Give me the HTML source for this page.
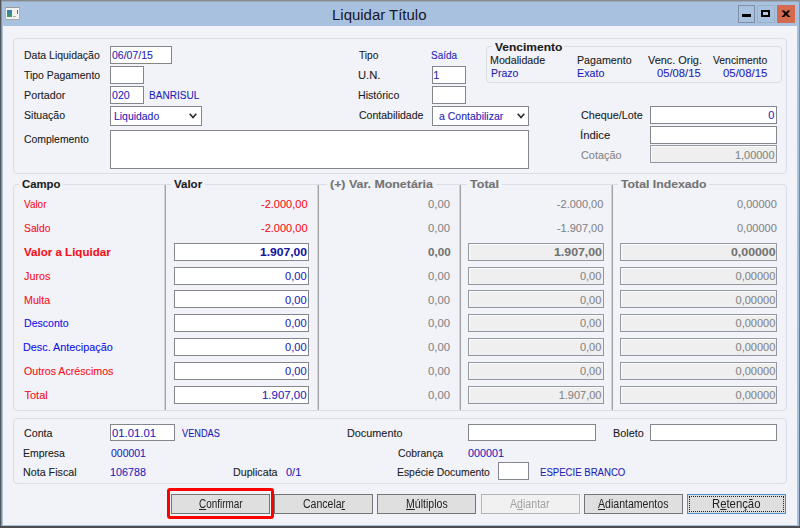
<!DOCTYPE html>
<html lang="pt-BR">
<head>
<meta charset="utf-8">
<title>Liquidar Título</title>
<style>
*{box-sizing:border-box;margin:0;padding:0}
html,body{width:800px;height:528px;overflow:hidden;background:#f2f3f9}
body{font-family:"Liberation Sans",sans-serif;font-size:11px;color:#1c1c1c;position:relative}
.t{position:absolute;white-space:nowrap;line-height:14px;height:14px;transform-origin:0 50%;-webkit-text-stroke:0.1px currentColor}
.b{font-weight:bold}
.bl{color:#1f1fb8}
.rd{color:#f50f18}
.lb{color:#1212e6}
.gy{color:#858585}
.b.gy{color:#737373}
.b.bl{color:#15159e}
.ttl{color:#16162a;-webkit-text-stroke:0}
#frame{position:absolute;left:0;top:0;width:800px;height:528px;background:#a7c1de}
.e{position:absolute}
#client{position:absolute;left:3px;top:26px;width:794px;height:499px;background:#f2f3f9}
.gb{position:absolute;border:1px solid #d7dfe4;border-radius:4px}
.lg{position:absolute;background:#f2f3f9;height:3px}
.in{position:absolute;background:#fff;border:1px solid #84868e}
.in.dis{background:#efefef;border-color:#9498a3;box-shadow:inset 1px 1px 0 rgba(255,255,255,.7)}
.btn{position:absolute;top:494px;width:99px;height:20px;border:1px solid #757575;background:#dfdfdf}
.bt{color:#222;-webkit-text-stroke:0;will-change:opacity}
.bd{color:#a2a2a2}
.btn.dis{background:#f1f1f1;border-color:#b6b6b6}
.btn.foc{border-color:#4b8fce}
.btn.foc i{position:absolute;left:1px;top:1px;right:1px;bottom:1px;border:1px dotted #222}
.vl{position:absolute;width:2px;background:linear-gradient(90deg,#d2d2d6 0,#d2d2d6 50%,#a3a3a6 50%);top:185px;height:225px}
u{text-decoration:underline;text-underline-offset:1px}
</style>
</head>
<body>
<div id="frame"></div>
<div class="e" style="left:0;top:0;width:800px;height:1px;background:#8a8a8a"></div>
<div class="e" style="left:0;top:1px;width:800px;height:1px;background:#99a9bd"></div>
<div class="e" style="left:0;top:0;width:1px;height:528px;background:#555"></div>
<div class="e" style="left:1px;top:1px;width:1px;height:525px;background:#8392a6"></div>
<div class="e" style="left:799px;top:0;width:1px;height:528px;background:linear-gradient(#909396,#6c6c6c)"></div>
<div class="e" style="left:0;top:526px;width:800px;height:2px;background:#4e4e4e"></div>
<div id="client"></div>
<!-- title bar icon -->
<div class="e" style="left:5px;top:7px;width:15px;height:13px;background:#f2f2f2;border:1px solid #b4b4b4;border-top-color:#9a9a9a;border-bottom-color:#a8a8a8"></div>
<div class="e" style="left:7px;top:10px;width:5px;height:7px;background:linear-gradient(#3a78b8,#3aa060)"></div>
<div class="e" style="left:17px;top:10px;width:1px;height:4px;background:linear-gradient(#3060b0,#40a050)"></div>
<div class="e" style="left:13px;top:16px;width:3px;height:1px;background:#b0b0b0"></div>
<!-- caption buttons -->
<div class="e" style="left:738px;top:5px;width:17px;height:18px;border:1px solid #7d8ea6;background:#a7c1de"></div>
<div class="e" style="left:742px;top:14px;width:9px;height:3px;background:#000"></div>
<div class="e" style="left:757px;top:5px;width:18px;height:18px;border:1px solid #9db1ca;background:#a7c1de"></div>
<div class="e" style="left:761px;top:10px;width:9px;height:7px;border:2px solid #000;background:#b3c9e3"></div>
<div class="e" style="left:777px;top:5px;width:18px;height:18px;background:#d46a50"></div>
<svg class="e" style="left:777px;top:5px" width="18" height="18" viewBox="0 0 18 18"><path d="M4.5 5.4 L7.1 5.4 L8.95 7.4 L10.8 5.4 L13.4 5.4 L10.3 8.7 L13.4 12 L10.8 12 L8.95 10 L7.1 12 L4.5 12 L7.6 8.7 Z" fill="#000"/></svg>

<div class="gb" style="left:13px;top:38px;width:774px;height:136px"></div>
<div class="gb" style="left:486px;top:46px;width:296px;height:37px"></div>
<div class="lg" style="left:492px;top:45px;width:72px"></div>
<div class="gb" style="left:13px;top:184px;width:774px;height:227px"></div>
<div class="lg" style="left:19px;top:183px;width:44px"></div>
<div class="lg" style="left:171px;top:183px;width:34px"></div>
<div class="lg" style="left:327px;top:183px;width:109px"></div>
<div class="lg" style="left:467px;top:183px;width:35px"></div>
<div class="lg" style="left:618px;top:183px;width:91px"></div>
<div class="vl" style="left:164px"></div>
<div class="vl" style="left:317px"></div>
<div class="vl" style="left:459px"></div>
<div class="vl" style="left:611px"></div>
<div class="gb" style="left:13px;top:418px;width:774px;height:66px"></div>
<div class="in " style="left:110px;top:46px;width:62px;height:18px"></div>
<div class="in " style="left:110px;top:66px;width:34px;height:18px"></div>
<div class="in " style="left:110px;top:86px;width:34px;height:18px"></div>
<div class="in " style="left:110px;top:106px;width:92px;height:20px"></div>
<div class="in " style="left:432px;top:66px;width:34px;height:18px"></div>
<div class="in " style="left:432px;top:86px;width:34px;height:18px"></div>
<div class="in " style="left:432px;top:106px;width:97px;height:20px"></div>
<div class="in " style="left:110px;top:129.5px;width:419px;height:39.5px"></div>
<div class="in " style="left:650px;top:106px;width:127px;height:18px"></div>
<div class="in " style="left:650px;top:126px;width:127px;height:18px"></div>
<div class="in dis" style="left:650px;top:145px;width:127px;height:18px"></div>
<div class="in " style="left:174px;top:243px;width:135px;height:18px"></div>
<div class="in dis" style="left:468px;top:243px;width:136px;height:18px"></div>
<div class="in dis" style="left:620px;top:243px;width:157px;height:18px"></div>
<div class="in " style="left:174px;top:267px;width:135px;height:18px"></div>
<div class="in dis" style="left:468px;top:267px;width:136px;height:18px"></div>
<div class="in dis" style="left:620px;top:267px;width:157px;height:18px"></div>
<div class="in " style="left:174px;top:290px;width:135px;height:18px"></div>
<div class="in dis" style="left:468px;top:290px;width:136px;height:18px"></div>
<div class="in dis" style="left:620px;top:290px;width:157px;height:18px"></div>
<div class="in " style="left:174px;top:314px;width:135px;height:18px"></div>
<div class="in dis" style="left:468px;top:314px;width:136px;height:18px"></div>
<div class="in dis" style="left:620px;top:314px;width:157px;height:18px"></div>
<div class="in " style="left:174px;top:338px;width:135px;height:18px"></div>
<div class="in dis" style="left:468px;top:338px;width:136px;height:18px"></div>
<div class="in dis" style="left:620px;top:338px;width:157px;height:18px"></div>
<div class="in " style="left:174px;top:362px;width:135px;height:18px"></div>
<div class="in dis" style="left:468px;top:362px;width:136px;height:18px"></div>
<div class="in dis" style="left:620px;top:362px;width:157px;height:18px"></div>
<div class="in " style="left:174px;top:386px;width:135px;height:18px"></div>
<div class="in dis" style="left:468px;top:386px;width:136px;height:18px"></div>
<div class="in dis" style="left:620px;top:386px;width:157px;height:18px"></div>
<div class="in " style="left:110px;top:424px;width:65px;height:17px"></div>
<div class="in " style="left:468px;top:424px;width:128px;height:17px"></div>
<div class="in " style="left:650px;top:424px;width:127px;height:17px"></div>
<div class="in " style="left:497.5px;top:462px;width:31.5px;height:18px"></div>
<svg class="e" style="left:188.3px;top:111px" width="10" height="10" viewBox="0 0 10 10"><path d="M1.7 2.8 L5 6.5 L8.3 2.8" stroke="#2a2a2a" stroke-width="1.6" fill="none"/></svg>
<svg class="e" style="left:515.5px;top:111px" width="10" height="10" viewBox="0 0 10 10"><path d="M1.7 2.8 L5 6.5 L8.3 2.8" stroke="#2a2a2a" stroke-width="1.6" fill="none"/></svg>
<div class="e" style="left:167px;top:488px;width:107px;height:31px;border:3px solid #ff0000;border-radius:3px"></div>
<div class="btn " style="left:171px"></div>
<div class="btn " style="left:274px"></div>
<div class="btn " style="left:377px"></div>
<div class="btn dis" style="left:480.5px"></div>
<div class="btn " style="left:584px"></div>
<div class="btn foc" style="left:687px"><i></i></div>
<div class="t ttl" id="t0" style="left:331.87px;transform:scaleX(0.9966);top:4.50px;font-size:15px;line-height:20px;height:20px;">Liquidar Título</div>
<div class="t " id="t1" style="left:23.69px;transform:scaleX(0.9527);top:48.00px;">Data Liquidação</div>
<div class="t " id="t2" style="left:24.41px;transform:scaleX(0.9472);top:68.00px;">Tipo Pagamento</div>
<div class="t " id="t3" style="left:23.76px;transform:scaleX(0.9768);top:88.00px;">Portador</div>
<div class="t " id="t4" style="left:23.63px;transform:scaleX(0.9592);top:108.00px;">Situação</div>
<div class="t " id="t5" style="left:24.00px;transform:scaleX(0.9468);top:131.50px;">Complemento</div>
<div class="t " id="t6" style="left:358.60px;transform:scaleX(0.9244);top:48.00px;">Tipo</div>
<div class="t " id="t7" style="left:358.25px;transform:scaleX(1.0209);top:68.00px;">U.N.</div>
<div class="t " id="t8" style="left:358.12px;transform:scaleX(0.9664);top:88.00px;">Histórico</div>
<div class="t " id="t9" style="left:358.78px;transform:scaleX(0.9580);top:108.00px;">Contabilidade</div>
<div class="t bl" id="t10" style="left:431.48px;transform:scaleX(0.9048);top:48.00px;">Saída</div>
<div class="t bl" id="t11" style="left:112.27px;transform:scaleX(0.9552);top:48.00px;">06/07/15</div>
<div class="t bl" id="t12" style="left:111.76px;transform:scaleX(0.9632);top:88.00px;">020</div>
<div class="t bl" id="t13" style="left:149.11px;transform:scaleX(0.9142);top:88.00px;">BANRISUL</div>
<div class="t bl" id="t14" style="left:114.08px;transform:scaleX(0.9472);top:108.50px;">Liquidado</div>
<div class="t bl" id="t15" style="left:433.34px;transform:scaleX(1.0000);top:68.00px;">1</div>
<div class="t bl" id="t16" style="left:439.43px;transform:scaleX(0.9553);top:108.50px;">a Contabilizar</div>
<div class="t b" id="t17" style="left:494.64px;transform:scaleX(1.0902);top:40.00px;">Vencimento</div>
<div class="t " id="t18" style="left:490.02px;transform:scaleX(0.9696);top:53.00px;">Modalidade</div>
<div class="t bl" id="t19" style="left:490.88px;transform:scaleX(0.9538);top:66.00px;">Prazo</div>
<div class="t " id="t20" style="left:576.97px;transform:scaleX(0.9702);top:53.00px;">Pagamento</div>
<div class="t bl" id="t21" style="left:576.55px;transform:scaleX(0.9730);top:66.00px;">Exato</div>
<div class="t " id="t22" style="left:647.62px;transform:scaleX(0.9913);top:53.00px;">Venc. Orig.</div>
<div class="t bl" id="t23" style="left:657.28px;transform:scaleX(1.0189);top:66.00px;">05/08/15</div>
<div class="t " id="t24" style="left:713.38px;transform:scaleX(0.9432);top:53.00px;">Vencimento</div>
<div class="t bl" id="t25" style="left:723.25px;transform:scaleX(1.0354);top:66.00px;">05/08/15</div>
<div class="t " id="t26" style="left:580.58px;transform:scaleX(0.9817);top:107.50px;">Cheque/Lote</div>
<div class="t " id="t27" style="left:580.49px;transform:scaleX(1.0290);top:127.50px;">Índice</div>
<div class="t gy" id="t28" style="left:581.11px;transform:scaleX(0.9888);top:147.50px;">Cotação</div>
<div class="t bl" id="t29" style="left:768.14px;transform:scaleX(1.0000);top:107.50px;">0</div>
<div class="t gy" id="t30" style="left:734.84px;transform:scaleX(0.9935);top:147.50px;">1,00000</div>
<div class="t b" id="t31" style="left:22.40px;transform:scaleX(1.0320);top:176.50px;">Campo</div>
<div class="t b" id="t32" style="left:173.77px;transform:scaleX(1.0446);top:176.50px;">Valor</div>
<div class="t b gy" id="t33" style="left:329.85px;transform:scaleX(1.1262);top:176.50px;">(+) Var. Monetária</div>
<div class="t b gy" id="t34" style="left:470.10px;transform:scaleX(1.1408);top:176.50px;">Total</div>
<div class="t b gy" id="t35" style="left:620.93px;transform:scaleX(1.1142);top:176.50px;">Total Indexado</div>
<div class="t rd" id="t36" style="left:24.22px;transform:scaleX(0.9032);top:197.00px;">Valor</div>
<div class="t rd" id="t37" style="left:23.71px;transform:scaleX(0.9383);top:221.00px;">Saldo</div>
<div class="t rd b" id="t38" style="left:24.21px;transform:scaleX(1.0501);top:245.00px;">Valor a Liquidar</div>
<div class="t rd" id="t39" style="left:23.83px;transform:scaleX(0.9795);top:268.70px;">Juros</div>
<div class="t rd" id="t40" style="left:23.86px;transform:scaleX(0.9699);top:292.50px;">Multa</div>
<div class="t lb" id="t41" style="left:23.98px;transform:scaleX(0.9605);top:316.20px;">Desconto</div>
<div class="t lb" id="t42" style="left:22.99px;transform:scaleX(0.9845);top:340.00px;">Desc. Antecipação</div>
<div class="t rd" id="t43" style="left:23.84px;transform:scaleX(0.9687);top:363.70px;">Outros Acréscimos</div>
<div class="t rd" id="t44" style="left:24.50px;transform:scaleX(1.0000);top:387.50px;">Total</div>
<div class="t rd" id="t45" style="left:260.70px;transform:scaleX(1.0014);top:197.00px;">-2.000,00</div>
<div class="t rd" id="t46" style="left:260.70px;transform:scaleX(1.0014);top:221.00px;">-2.000,00</div>
<div class="t bl b" id="t47" style="left:259.80px;transform:scaleX(1.0989);top:245.00px;">1.907,00</div>
<div class="t bl" id="t48" style="left:284.86px;transform:scaleX(1.0055);top:268.70px;">0,00</div>
<div class="t bl" id="t49" style="left:284.86px;transform:scaleX(1.0055);top:292.50px;">0,00</div>
<div class="t bl" id="t50" style="left:284.86px;transform:scaleX(1.0055);top:316.20px;">0,00</div>
<div class="t bl" id="t51" style="left:284.86px;transform:scaleX(1.0055);top:340.00px;">0,00</div>
<div class="t bl" id="t52" style="left:284.86px;transform:scaleX(1.0055);top:363.70px;">0,00</div>
<div class="t bl" id="t53" style="left:261.99px;transform:scaleX(1.0397);top:387.50px;">1.907,00</div>
<div class="t gy" id="t54" style="left:428.36px;transform:scaleX(1.0264);top:197.00px;">0,00</div>
<div class="t gy" id="t55" style="left:428.36px;transform:scaleX(1.0264);top:221.00px;">0,00</div>
<div class="t gy b" id="t56" style="left:427.50px;transform:scaleX(1.0604);top:245.00px;">0,00</div>
<div class="t gy" id="t57" style="left:428.36px;transform:scaleX(1.0264);top:268.70px;">0,00</div>
<div class="t gy" id="t58" style="left:428.36px;transform:scaleX(1.0264);top:292.50px;">0,00</div>
<div class="t gy" id="t59" style="left:428.36px;transform:scaleX(1.0264);top:316.20px;">0,00</div>
<div class="t gy" id="t60" style="left:428.36px;transform:scaleX(1.0264);top:340.00px;">0,00</div>
<div class="t gy" id="t61" style="left:428.36px;transform:scaleX(1.0264);top:363.70px;">0,00</div>
<div class="t gy" id="t62" style="left:428.36px;transform:scaleX(1.0264);top:387.50px;">0,00</div>
<div class="t gy" id="t63" style="left:556.86px;transform:scaleX(1.0000);top:197.00px;">-2.000,00</div>
<div class="t gy" id="t64" style="left:556.89px;transform:scaleX(1.0000);top:221.00px;">-1.907,00</div>
<div class="t gy b" id="t65" style="left:554.22px;transform:scaleX(1.1200);top:245.00px;">1.907,00</div>
<div class="t gy" id="t66" style="left:579.90px;transform:scaleX(1.0000);top:268.70px;">0,00</div>
<div class="t gy" id="t67" style="left:579.90px;transform:scaleX(1.0000);top:292.50px;">0,00</div>
<div class="t gy" id="t68" style="left:579.90px;transform:scaleX(1.0000);top:316.20px;">0,00</div>
<div class="t gy" id="t69" style="left:579.90px;transform:scaleX(1.0000);top:340.00px;">0,00</div>
<div class="t gy" id="t70" style="left:579.90px;transform:scaleX(1.0000);top:363.70px;">0,00</div>
<div class="t gy" id="t71" style="left:558.68px;transform:scaleX(1.0000);top:387.50px;">1.907,00</div>
<div class="t gy" id="t72" style="left:737.00px;transform:scaleX(1.0000);top:197.00px;">0,00000</div>
<div class="t gy" id="t73" style="left:737.00px;transform:scaleX(1.0000);top:221.00px;">0,00000</div>
<div class="t gy b" id="t74" style="left:730.94px;transform:scaleX(1.1200);top:245.00px;">0,00000</div>
<div class="t gy" id="t75" style="left:735.58px;transform:scaleX(1.0000);top:268.70px;">0,00000</div>
<div class="t gy" id="t76" style="left:735.58px;transform:scaleX(1.0000);top:292.50px;">0,00000</div>
<div class="t gy" id="t77" style="left:735.58px;transform:scaleX(1.0000);top:316.20px;">0,00000</div>
<div class="t gy" id="t78" style="left:735.58px;transform:scaleX(1.0000);top:340.00px;">0,00000</div>
<div class="t gy" id="t79" style="left:735.58px;transform:scaleX(1.0000);top:363.70px;">0,00000</div>
<div class="t gy" id="t80" style="left:735.58px;transform:scaleX(1.0000);top:387.50px;">0,00000</div>
<div class="t " id="t81" style="left:23.72px;transform:scaleX(0.9721);top:425.50px;">Conta</div>
<div class="t " id="t82" style="left:22.90px;transform:scaleX(0.9515);top:445.50px;">Empresa</div>
<div class="t " id="t83" style="left:22.70px;transform:scaleX(0.9740);top:465.00px;">Nota Fiscal</div>
<div class="t bl" id="t84" style="left:111.92px;transform:scaleX(1.0275);top:425.50px;">01.01.01</div>
<div class="t bl" id="t85" style="left:182.01px;transform:scaleX(0.8355);top:425.50px;">VENDAS</div>
<div class="t bl" id="t86" style="left:111.37px;transform:scaleX(0.9514);top:445.50px;">000001</div>
<div class="t bl" id="t87" style="left:109.92px;transform:scaleX(0.9797);top:465.00px;">106788</div>
<div class="t " id="t88" style="left:233.20px;transform:scaleX(0.9717);top:465.00px;">Duplicata</div>
<div class="t bl" id="t89" style="left:285.68px;transform:scaleX(0.9968);top:465.00px;">0/1</div>
<div class="t " id="t90" style="left:346.81px;transform:scaleX(0.9865);top:425.50px;">Documento</div>
<div class="t " id="t91" style="left:397.94px;transform:scaleX(0.9463);top:445.50px;">Cobrança</div>
<div class="t " id="t92" style="left:396.56px;transform:scaleX(0.9433);top:465.00px;">Espécie Documento</div>
<div class="t bl" id="t93" style="left:467.50px;transform:scaleX(0.9812);top:445.50px;">000001</div>
<div class="t bl" id="t94" style="left:539.56px;transform:scaleX(0.8718);top:465.00px;">ESPECIE BRANCO</div>
<div class="t " id="t95" style="left:612.60px;transform:scaleX(0.9859);top:425.50px;">Boleto</div>
<div class="t bt" id="t96" style="left:198.87px;transform:scaleX(0.8264);top:497.00px;font-size:12px;line-height:14px;height:14px;"><u>C</u>onfirmar</div>
<div class="t bt" id="t97" style="left:302.90px;transform:scaleX(0.8759);top:497.00px;font-size:12px;line-height:14px;height:14px;">Cancela<u>r</u></div>
<div class="t bt" id="t98" style="left:405.83px;transform:scaleX(0.8803);top:497.00px;font-size:12px;line-height:14px;height:14px;"><u>M</u>últiplos</div>
<div class="t bt bd" id="t99" style="left:509.72px;transform:scaleX(0.8842);top:497.00px;font-size:12px;line-height:14px;height:14px;">A<u>d</u>iantar</div>
<div class="t bt" id="t100" style="left:597.58px;transform:scaleX(0.8800);top:497.00px;font-size:12px;line-height:14px;height:14px;"><u>A</u>diantamentos</div>
<div class="t bt" id="t101" style="left:712.30px;transform:scaleX(0.9422);top:497.00px;font-size:12px;line-height:14px;height:14px;">R<u>e</u>tenção</div>
</body>
</html>
